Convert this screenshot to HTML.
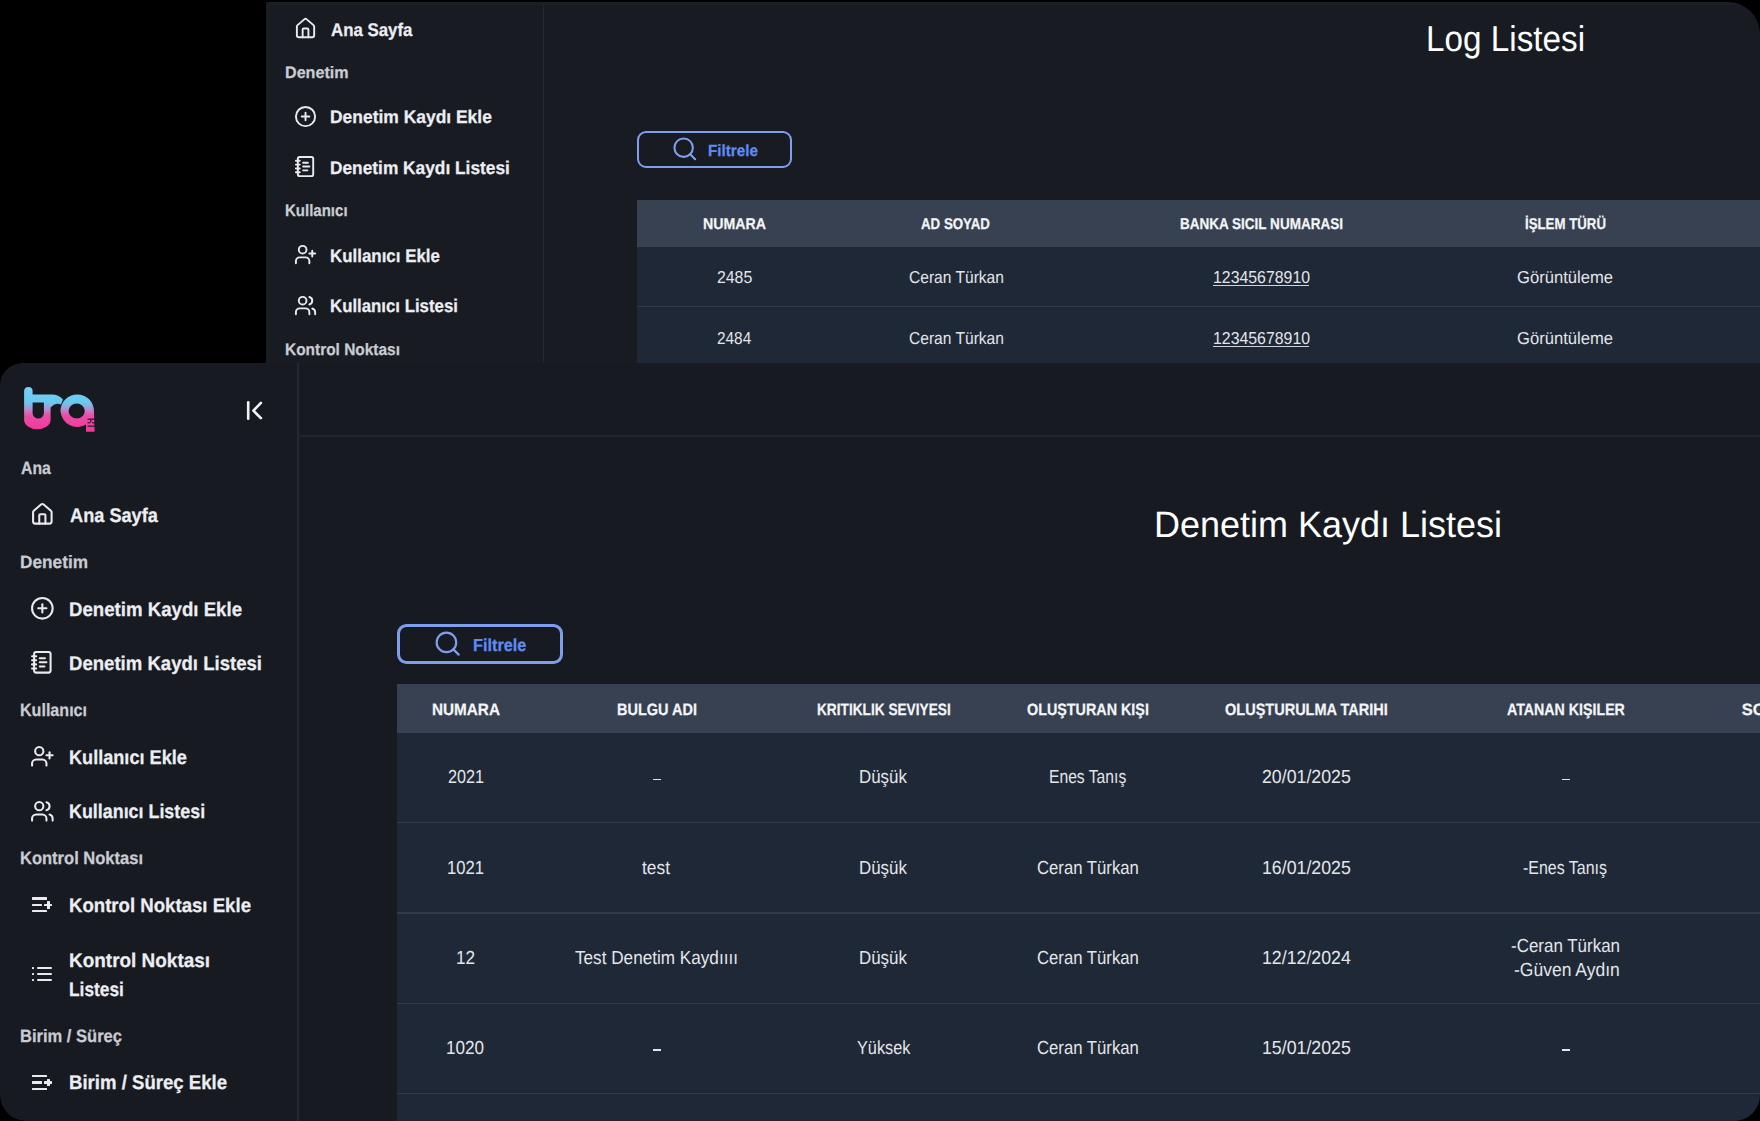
<!DOCTYPE html>
<html><head><meta charset="utf-8"><style>
*{margin:0;padding:0;box-sizing:border-box}
html,body{width:1760px;height:1121px;overflow:hidden;background:#000}
body{position:relative;font-family:"Liberation Sans",sans-serif;text-rendering:geometricPrecision}
.t{position:absolute;white-space:nowrap;transform-origin:0 0}
.t.b{-webkit-text-stroke:0.25px currentColor}
.ic{position:absolute;overflow:visible}
.r{position:absolute}
</style></head><body>
<div class="r" style="left:0;top:0;width:1760px;height:1121px;clip-path:inset(2px 0px 0px 266px round 0px 32px 0px 0px)">
<div class="r" style="left:266px;top:2px;width:1600px;height:400px;background:#181b22;border-top-right-radius:32px;border-top:3px solid #1c1f23;border-left:4px solid #1b1e21"></div>
<div class="r" style="left:542.5px;top:5px;width:1px;height:360px;background:#242934"></div>
<svg class="ic" style="left:294.12px;top:16.50px;width:23.05px;height:23.05px" viewBox="0 0 24 24" fill="none" stroke="#e9eaee" stroke-width="2" stroke-linecap="round" stroke-linejoin="round"><path d="M15 21v-8a1 1 0 0 0-1-1h-4a1 1 0 0 0-1 1v8"/><path d="M3 10a2 2 0 0 1 .709-1.528l7-5.999a2 2 0 0 1 2.582 0l7 5.999A2 2 0 0 1 21 10v9a2 2 0 0 1-2 2H5a2 2 0 0 1-2-2z"/></svg>
<svg class="ic" style="left:294.12px;top:104.70px;width:23.05px;height:23.05px" viewBox="0 0 24 24" fill="none" stroke="#e9eaee" stroke-width="2" stroke-linecap="round" stroke-linejoin="round"><circle cx="12" cy="12" r="10"/><path d="M8 12h8"/><path d="M12 8v8"/></svg>
<svg class="ic" style="left:294.12px;top:155.00px;width:23.05px;height:23.05px" viewBox="0 0 24 24" fill="none" stroke="#e9eaee" stroke-width="2" stroke-linecap="round" stroke-linejoin="round"><path d="M2 6h4"/><path d="M2 10h4"/><path d="M2 14h4"/><path d="M2 18h4"/><rect width="16" height="20" x="4" y="2" rx="2"/><path d="M9.5 8h5"/><path d="M9.5 12H16"/><path d="M9.5 16H14"/></svg>
<svg class="ic" style="left:294.12px;top:242.90px;width:23.05px;height:23.05px" viewBox="0 0 24 24" fill="none" stroke="#e9eaee" stroke-width="2" stroke-linecap="round" stroke-linejoin="round"><path d="M16 21v-2a4 4 0 0 0-4-4H6a4 4 0 0 0-4 4v2"/><circle cx="9" cy="7" r="4"/><line x1="19" x2="19" y1="8" y2="14"/><line x1="22" x2="16" y1="11" y2="11"/></svg>
<svg class="ic" style="left:294.12px;top:294.10px;width:23.05px;height:23.05px" viewBox="0 0 24 24" fill="none" stroke="#e9eaee" stroke-width="2" stroke-linecap="round" stroke-linejoin="round"><path d="M16 21v-2a4 4 0 0 0-4-4H6a4 4 0 0 0-4 4v2"/><circle cx="9" cy="7" r="4"/><path d="M22 21v-2a4 4 0 0 0-3-3.87"/><path d="M16 3.13a4 4 0 0 1 0 7.75"/></svg>
<div class="t b" style="left:330.90px;top:21.09px;font-size:18.31px;line-height:18.31px;font-weight:bold;color:#eceef2;transform:scaleX(0.9193);">Ana Sayfa</div>
<div class="t b" style="left:329.90px;top:108.49px;font-size:18.31px;line-height:18.31px;font-weight:bold;color:#eceef2;transform:scaleX(0.9531);">Denetim Kaydı Ekle</div>
<div class="t b" style="left:329.90px;top:158.89px;font-size:18.31px;line-height:18.31px;font-weight:bold;color:#eceef2;transform:scaleX(0.9459);">Denetim Kaydı Listesi</div>
<div class="t b" style="left:329.90px;top:247.29px;font-size:18.31px;line-height:18.31px;font-weight:bold;color:#eceef2;transform:scaleX(0.9238);">Kullanıcı Ekle</div>
<div class="t b" style="left:329.90px;top:297.09px;font-size:18.31px;line-height:18.31px;font-weight:bold;color:#eceef2;transform:scaleX(0.9183);">Kullanıcı Listesi</div>
<div class="t b" style="left:284.50px;top:65.17px;font-size:16.57px;line-height:16.57px;font-weight:bold;color:#c9ccd3;transform:scaleX(0.9726);">Denetim</div>
<div class="t b" style="left:284.50px;top:203.37px;font-size:16.57px;line-height:16.57px;font-weight:bold;color:#c9ccd3;transform:scaleX(0.9063);">Kullanıcı</div>
<div class="t b" style="left:284.50px;top:341.57px;font-size:16.57px;line-height:16.57px;font-weight:bold;color:#c9ccd3;transform:scaleX(0.9325);">Kontrol Noktası</div>
<div class="t" style="left:1426.00px;top:20.88px;font-size:36.05px;line-height:36.05px;font-weight:normal;color:#ffffff;transform:scaleX(0.9232);">Log Listesi</div>
<div class="r" style="left:636.8px;top:131px;width:155.5px;height:37px;border:2.8px solid #7d9fee;border-radius:9px"></div>
<svg class="ic" style="left:670.75px;top:135.05px;width:27.60px;height:27.60px" viewBox="0 0 24 24" fill="none" stroke="#7d9fee" stroke-width="1.8" stroke-linecap="round" stroke-linejoin="round"><circle cx="11" cy="11" r="8"/><path d="m21 21-4.3-4.3"/></svg>
<div class="t b" style="left:708.10px;top:142.74px;font-size:16.13px;line-height:16.13px;font-weight:bold;color:#5f8cf2;transform:scaleX(0.9445);">Filtrele</div>
<div class="r" style="left:636.5px;top:200px;width:1200px;height:46.5px;background:#374151"></div>
<div class="r" style="left:636.5px;top:246.5px;width:1200px;height:130px;background:#1f2837"></div>
<div class="r" style="left:636.5px;top:306px;width:1200px;height:1px;background:#333b4a"></div>
<div class="t b" style="left:702.99px;top:217.33px;font-size:15.55px;line-height:15.55px;font-weight:bold;color:#f4f5f7;transform:scaleX(0.9118);">NUMARA</div>
<div class="t b" style="left:921.20px;top:217.33px;font-size:15.55px;line-height:15.55px;font-weight:bold;color:#f4f5f7;transform:scaleX(0.8553);">AD SOYAD</div>
<div class="t b" style="left:1179.69px;top:217.33px;font-size:15.55px;line-height:15.55px;font-weight:bold;color:#f4f5f7;transform:scaleX(0.8694);">BANKA SICIL NUMARASI</div>
<div class="t b" style="left:1524.98px;top:217.33px;font-size:15.55px;line-height:15.55px;font-weight:bold;color:#f4f5f7;transform:scaleX(0.8527);">İŞLEM TÜRÜ</div>
<div class="t" style="left:716.98px;top:268.76px;font-size:17.30px;line-height:17.30px;font-weight:normal;color:#e3e5e9;transform:scaleX(0.9159);">2485</div>
<div class="t" style="left:908.99px;top:268.76px;font-size:17.30px;line-height:17.30px;font-weight:normal;color:#e3e5e9;transform:scaleX(0.9011);">Ceran Türkan</div>
<div class="t" style="left:1212.53px;top:268.76px;font-size:17.30px;line-height:17.30px;font-weight:normal;color:#e3e5e9;transform:scaleX(0.9179);">12345678910</div>
<div class="r" style="left:1213.4px;top:284.6px;width:95.7px;height:1.2px;background:#d0d3d9"></div>
<div class="t" style="left:1517.16px;top:268.76px;font-size:17.30px;line-height:17.30px;font-weight:normal;color:#e3e5e9;transform:scaleX(0.9610);">Görüntüleme</div>
<div class="t" style="left:716.98px;top:329.86px;font-size:17.30px;line-height:17.30px;font-weight:normal;color:#e3e5e9;transform:scaleX(0.8898);">2484</div>
<div class="t" style="left:908.99px;top:329.86px;font-size:17.30px;line-height:17.30px;font-weight:normal;color:#e3e5e9;transform:scaleX(0.9011);">Ceran Türkan</div>
<div class="t" style="left:1212.53px;top:329.86px;font-size:17.30px;line-height:17.30px;font-weight:normal;color:#e3e5e9;transform:scaleX(0.9179);">12345678910</div>
<div class="r" style="left:1213.4px;top:345.7px;width:95.7px;height:1.2px;background:#d0d3d9"></div>
<div class="t" style="left:1517.16px;top:329.86px;font-size:17.30px;line-height:17.30px;font-weight:normal;color:#e3e5e9;transform:scaleX(0.9610);">Görüntüleme</div>
</div>
<div class="r" style="left:0;top:0;width:1760px;height:1121px;clip-path:inset(363px 0px 0px 0px round 22px 0px 26px 26px)">
<div class="r" style="left:0;top:363px;width:1760px;height:758px;background:#171a21;border-top-left-radius:22px;border-bottom-left-radius:26px;border-bottom-right-radius:26px;overflow:hidden">
</div>
<div class="r" style="left:297px;top:363px;width:1.5px;height:758px;background:#232833"></div>
<div class="r" style="left:298px;top:435.3px;width:1462px;height:1.4px;background:#20242c"></div>
<svg class="ic" style="left:15px;top:380px;width:90px;height:60px" viewBox="0 0 90 60">
<defs><linearGradient id="lg" x1="0" y1="7" x2="0" y2="50" gradientUnits="userSpaceOnUse">
<stop offset="0" stop-color="#74d3f6"/><stop offset="0.36" stop-color="#69c8ef"/><stop offset="0.52" stop-color="#b98ccd"/><stop offset="0.66" stop-color="#e94ea8"/><stop offset="1" stop-color="#f4369a"/></linearGradient></defs>
<g fill="url(#lg)" fill-rule="evenodd">
<path d="M9.1 11.5 Q9.1 7 13.4 7 Q17.6 7 17.6 11 L17.6 14.4 L37 14.4 Q43.5 14.4 48 19.5 L46 24.5 Q40.5 22 35.6 27.5 L35.6 40 A13.25 9.2 0 0 1 9.1 40 Z M17.6 22.5 L28.9 22.5 L28.9 33 A5.65 5.5 0 0 1 17.6 33 Z"/>
<path d="M45.5 31.2 A16.75 16.8 0 0 1 79 31.2 L79.6 51.8 L71 51.8 L71 44.5 A16.75 16.8 0 0 1 45.5 31.2 Z M53.6 31 A8.1 7.6 0 0 0 69.8 31 A8.1 7.6 0 0 0 53.6 31 Z"/>
</g>
<g fill="#171a21"><rect x="72.5" y="38.6" width="7.5" height="1.2"/><rect x="72.5" y="42.2" width="3" height="1.1"/><rect x="77" y="42.2" width="3" height="1.1"/><rect x="72.5" y="45.6" width="7.5" height="1.1"/><rect x="75.2" y="40" width="1.2" height="2"/></g>
</svg>
<svg class="ic" style="left:240px;top:395px;width:30px;height:30px" viewBox="0 0 30 30" fill="none" stroke="#f2f3f5" stroke-width="2.6" stroke-linecap="round" stroke-linejoin="round"><path d="M8.2 7.2 V23.8"/><path d="M20.9 7.9 L13.4 15.7 L20.9 23.2"/></svg>
<svg class="ic" style="left:29.60px;top:501.80px;width:24.70px;height:24.70px" viewBox="0 0 24 24" fill="none" stroke="#e9eaee" stroke-width="2" stroke-linecap="round" stroke-linejoin="round"><path d="M15 21v-8a1 1 0 0 0-1-1h-4a1 1 0 0 0-1 1v8"/><path d="M3 10a2 2 0 0 1 .709-1.528l7-5.999a2 2 0 0 1 2.582 0l7 5.999A2 2 0 0 1 21 10v9a2 2 0 0 1-2 2H5a2 2 0 0 1-2-2z"/></svg>
<svg class="ic" style="left:29.60px;top:596.00px;width:24.70px;height:24.70px" viewBox="0 0 24 24" fill="none" stroke="#e9eaee" stroke-width="2" stroke-linecap="round" stroke-linejoin="round"><circle cx="12" cy="12" r="10"/><path d="M8 12h8"/><path d="M12 8v8"/></svg>
<svg class="ic" style="left:29.60px;top:650.00px;width:24.70px;height:24.70px" viewBox="0 0 24 24" fill="none" stroke="#e9eaee" stroke-width="2" stroke-linecap="round" stroke-linejoin="round"><path d="M2 6h4"/><path d="M2 10h4"/><path d="M2 14h4"/><path d="M2 18h4"/><rect width="16" height="20" x="4" y="2" rx="2"/><path d="M9.5 8h5"/><path d="M9.5 12H16"/><path d="M9.5 16H14"/></svg>
<svg class="ic" style="left:29.60px;top:744.10px;width:24.70px;height:24.70px" viewBox="0 0 24 24" fill="none" stroke="#e9eaee" stroke-width="2" stroke-linecap="round" stroke-linejoin="round"><path d="M16 21v-2a4 4 0 0 0-4-4H6a4 4 0 0 0-4 4v2"/><circle cx="9" cy="7" r="4"/><line x1="19" x2="19" y1="8" y2="14"/><line x1="22" x2="16" y1="11" y2="11"/></svg>
<svg class="ic" style="left:29.60px;top:798.50px;width:24.70px;height:24.70px" viewBox="0 0 24 24" fill="none" stroke="#e9eaee" stroke-width="2" stroke-linecap="round" stroke-linejoin="round"><path d="M16 21v-2a4 4 0 0 0-4-4H6a4 4 0 0 0-4 4v2"/><circle cx="9" cy="7" r="4"/><path d="M22 21v-2a4 4 0 0 0-3-3.87"/><path d="M16 3.13a4 4 0 0 1 0 7.75"/></svg>
<div class="r" style="left:32px;top:897.20px;width:15.1px;height:2.4px;background:#e9eaee;border-radius:0.6px"></div>
<div class="r" style="left:32px;top:903.55px;width:9.7px;height:2.4px;background:#e9eaee;border-radius:0.6px"></div>
<div class="r" style="left:32px;top:909.90px;width:15.1px;height:2.4px;background:#e9eaee;border-radius:0.6px"></div>
<div class="r" style="left:47.4px;top:900.95px;width:2.4px;height:7.6px;background:#e9eaee;border-radius:0.6px"></div>
<div class="r" style="left:44.3px;top:903.55px;width:8px;height:2.4px;background:#e9eaee;border-radius:0.6px"></div>
<div class="r" style="left:32px;top:1075.10px;width:15.1px;height:2.4px;background:#e9eaee;border-radius:0.6px"></div>
<div class="r" style="left:32px;top:1081.35px;width:9.7px;height:2.4px;background:#e9eaee;border-radius:0.6px"></div>
<div class="r" style="left:32px;top:1087.60px;width:15.1px;height:2.4px;background:#e9eaee;border-radius:0.6px"></div>
<div class="r" style="left:47.4px;top:1078.75px;width:2.4px;height:7.6px;background:#e9eaee;border-radius:0.6px"></div>
<div class="r" style="left:44.3px;top:1081.35px;width:8px;height:2.4px;background:#e9eaee;border-radius:0.6px"></div>
<div class="r" style="left:31.6px;top:966.50px;width:2.3px;height:2.4px;background:#e9eaee;border-radius:0.5px"></div>
<div class="r" style="left:37.1px;top:966.50px;width:15px;height:2.4px;background:#e9eaee;border-radius:1.2px"></div>
<div class="r" style="left:31.6px;top:972.65px;width:2.3px;height:2.4px;background:#e9eaee;border-radius:0.5px"></div>
<div class="r" style="left:37.1px;top:972.65px;width:15px;height:2.4px;background:#e9eaee;border-radius:1.2px"></div>
<div class="r" style="left:31.6px;top:978.80px;width:2.3px;height:2.4px;background:#e9eaee;border-radius:0.5px"></div>
<div class="r" style="left:37.1px;top:978.80px;width:15px;height:2.4px;background:#e9eaee;border-radius:1.2px"></div>
<div class="t b" style="left:70.10px;top:506.16px;font-size:19.77px;line-height:19.77px;font-weight:bold;color:#eceef2;transform:scaleX(0.9195);margin-top:0.7px">Ana Sayfa</div>
<div class="t b" style="left:69.10px;top:600.06px;font-size:19.77px;line-height:19.77px;font-weight:bold;color:#eceef2;transform:scaleX(0.9430);margin-top:0.7px">Denetim Kaydı Ekle</div>
<div class="t b" style="left:69.10px;top:654.16px;font-size:19.77px;line-height:19.77px;font-weight:bold;color:#eceef2;transform:scaleX(0.9396);margin-top:0.7px">Denetim Kaydı Listesi</div>
<div class="t b" style="left:69.10px;top:747.96px;font-size:19.77px;line-height:19.77px;font-weight:bold;color:#eceef2;transform:scaleX(0.9168);margin-top:0.7px">Kullanıcı Ekle</div>
<div class="t b" style="left:69.10px;top:802.56px;font-size:19.77px;line-height:19.77px;font-weight:bold;color:#eceef2;transform:scaleX(0.9046);margin-top:0.7px">Kullanıcı Listesi</div>
<div class="t b" style="left:69.10px;top:896.16px;font-size:19.77px;line-height:19.77px;font-weight:bold;color:#eceef2;transform:scaleX(0.9414);margin-top:0.7px">Kontrol Noktası Ekle</div>
<div class="t b" style="left:69.10px;top:951.06px;font-size:19.77px;line-height:19.77px;font-weight:bold;color:#eceef2;transform:scaleX(0.9583);margin-top:0.7px">Kontrol Noktası</div>
<div class="t b" style="left:69.10px;top:980.16px;font-size:19.77px;line-height:19.77px;font-weight:bold;color:#eceef2;transform:scaleX(0.8761);margin-top:0.7px">Listesi</div>
<div class="t b" style="left:69.10px;top:1073.76px;font-size:19.77px;line-height:19.77px;font-weight:bold;color:#eceef2;transform:scaleX(0.9406);margin-top:0.7px">Birim / Süreç Ekle</div>
<div class="t b" style="left:20.60px;top:459.76px;font-size:17.88px;line-height:17.88px;font-weight:bold;color:#c9ccd3;transform:scaleX(0.8850);">Ana</div>
<div class="t b" style="left:19.60px;top:553.56px;font-size:17.88px;line-height:17.88px;font-weight:bold;color:#c9ccd3;transform:scaleX(0.9650);">Denetim</div>
<div class="t b" style="left:19.60px;top:701.86px;font-size:17.88px;line-height:17.88px;font-weight:bold;color:#c9ccd3;transform:scaleX(0.9002);">Kullanıcı</div>
<div class="t b" style="left:19.60px;top:850.06px;font-size:17.88px;line-height:17.88px;font-weight:bold;color:#c9ccd3;transform:scaleX(0.9251);">Kontrol Noktası</div>
<div class="t b" style="left:19.60px;top:1027.66px;font-size:17.88px;line-height:17.88px;font-weight:bold;color:#c9ccd3;transform:scaleX(0.9254);">Birim / Süreç</div>
<div class="t" style="left:1153.60px;top:507.19px;font-size:36.63px;line-height:36.63px;font-weight:normal;color:#ffffff;transform:scaleX(0.9823);">Denetim Kaydı Listesi</div>
<div class="r" style="left:396.6px;top:624px;width:166.7px;height:40px;border:3px solid #7d9fee;border-radius:9.5px"></div>
<svg class="ic" style="left:433.20px;top:628.70px;width:29.30px;height:29.30px" viewBox="0 0 24 24" fill="none" stroke="#7d9fee" stroke-width="1.8" stroke-linecap="round" stroke-linejoin="round"><circle cx="11" cy="11" r="8"/><path d="m21 21-4.3-4.3"/></svg>
<div class="t b" style="left:473.10px;top:636.53px;font-size:17.44px;line-height:17.44px;font-weight:bold;color:#5f8cf2;transform:scaleX(0.9326);">Filtrele</div>
<div class="r" style="left:397px;top:684px;width:1363px;height:49px;background:#374151"></div>
<div class="r" style="left:397px;top:733px;width:1363px;height:388px;background:#1f2837"></div>
<div class="r" style="left:397px;top:822.0px;width:1363px;height:1.3px;background:#333b4a"></div>
<div class="r" style="left:397px;top:912.3px;width:1363px;height:1.3px;background:#333b4a"></div>
<div class="r" style="left:397px;top:1002.5px;width:1363px;height:1.3px;background:#333b4a"></div>
<div class="r" style="left:397px;top:1092.7px;width:1363px;height:1.3px;background:#333b4a"></div>
<div class="t b" style="left:432.19px;top:701.69px;font-size:16.42px;line-height:16.42px;font-weight:bold;color:#f4f5f7;transform:scaleX(0.9318);">NUMARA</div>
<div class="t b" style="left:616.78px;top:701.69px;font-size:16.42px;line-height:16.42px;font-weight:bold;color:#f4f5f7;transform:scaleX(0.8831);">BULGU ADI</div>
<div class="t b" style="left:817.39px;top:701.69px;font-size:16.42px;line-height:16.42px;font-weight:bold;color:#f4f5f7;transform:scaleX(0.8332);">KRITIKLIK SEVIYESI</div>
<div class="t b" style="left:1027.20px;top:701.69px;font-size:16.42px;line-height:16.42px;font-weight:bold;color:#f4f5f7;transform:scaleX(0.8739);">OLUŞTURAN KIŞI</div>
<div class="t b" style="left:1225.20px;top:701.69px;font-size:16.42px;line-height:16.42px;font-weight:bold;color:#f4f5f7;transform:scaleX(0.8845);">OLUŞTURULMA TARIHI</div>
<div class="t b" style="left:1507.20px;top:701.69px;font-size:16.42px;line-height:16.42px;font-weight:bold;color:#f4f5f7;transform:scaleX(0.8660);">ATANAN KIŞILER</div>
<div class="t b" style="left:1741.80px;top:701.69px;font-size:16.42px;line-height:16.42px;font-weight:bold;color:#f4f5f7;transform:scaleX(1.0000);">SO</div>
<div class="t" style="left:448.00px;top:769.30px;font-size:18.90px;line-height:18.90px;font-weight:normal;color:#e3e5e9;transform:scaleX(0.8563);">2021</div>
<div class="r" style="left:652.50px;top:778.70px;width:8.6px;height:1.7px;background:#e3e5e9"></div>
<div class="t" style="left:858.93px;top:769.30px;font-size:18.90px;line-height:18.90px;font-weight:normal;color:#e3e5e9;transform:scaleX(0.8948);">Düşük</div>
<div class="t" style="left:1049.08px;top:769.30px;font-size:18.90px;line-height:18.90px;font-weight:normal;color:#e3e5e9;transform:scaleX(0.8293);">Enes Tanış</div>
<div class="t" style="left:1262.18px;top:769.30px;font-size:18.90px;line-height:18.90px;font-weight:normal;color:#e3e5e9;transform:scaleX(0.9394);">20/01/2025</div>
<div class="r" style="left:1561.70px;top:778.70px;width:8.6px;height:1.7px;background:#e3e5e9"></div>
<div class="t" style="left:446.99px;top:860.10px;font-size:18.90px;line-height:18.90px;font-weight:normal;color:#e3e5e9;transform:scaleX(0.8807);">1021</div>
<div class="t" style="left:642.40px;top:860.10px;font-size:18.90px;line-height:18.90px;font-weight:normal;color:#e3e5e9;transform:scaleX(0.9193);">test</div>
<div class="t" style="left:858.93px;top:860.10px;font-size:18.90px;line-height:18.90px;font-weight:normal;color:#e3e5e9;transform:scaleX(0.8948);">Düşük</div>
<div class="t" style="left:1036.78px;top:860.10px;font-size:18.90px;line-height:18.90px;font-weight:normal;color:#e3e5e9;transform:scaleX(0.8841);">Ceran Türkan</div>
<div class="t" style="left:1262.18px;top:860.10px;font-size:18.90px;line-height:18.90px;font-weight:normal;color:#e3e5e9;transform:scaleX(0.9394);">16/01/2025</div>
<div class="t" style="left:1523.49px;top:860.10px;font-size:18.90px;line-height:18.90px;font-weight:normal;color:#e3e5e9;transform:scaleX(0.8450);">-Enes Tanış</div>
<div class="t" style="left:455.97px;top:950.00px;font-size:18.90px;line-height:18.90px;font-weight:normal;color:#e3e5e9;transform:scaleX(0.9071);">12</div>
<div class="t" style="left:575.40px;top:950.00px;font-size:18.90px;line-height:18.90px;font-weight:normal;color:#e3e5e9;transform:scaleX(0.9077);">Test Denetim Kaydıııı</div>
<div class="t" style="left:858.93px;top:950.00px;font-size:18.90px;line-height:18.90px;font-weight:normal;color:#e3e5e9;transform:scaleX(0.8948);">Düşük</div>
<div class="t" style="left:1036.78px;top:950.00px;font-size:18.90px;line-height:18.90px;font-weight:normal;color:#e3e5e9;transform:scaleX(0.8841);">Ceran Türkan</div>
<div class="t" style="left:1262.18px;top:950.00px;font-size:18.90px;line-height:18.90px;font-weight:normal;color:#e3e5e9;transform:scaleX(0.9394);">12/12/2024</div>
<div class="t" style="left:446.49px;top:1039.80px;font-size:18.90px;line-height:18.90px;font-weight:normal;color:#e3e5e9;transform:scaleX(0.9045);">1020</div>
<div class="r" style="left:652.50px;top:1049.20px;width:8.6px;height:1.7px;background:#e3e5e9"></div>
<div class="t" style="left:856.69px;top:1039.80px;font-size:18.90px;line-height:18.90px;font-weight:normal;color:#e3e5e9;transform:scaleX(0.8616);">Yüksek</div>
<div class="t" style="left:1036.78px;top:1039.80px;font-size:18.90px;line-height:18.90px;font-weight:normal;color:#e3e5e9;transform:scaleX(0.8841);">Ceran Türkan</div>
<div class="t" style="left:1262.18px;top:1039.80px;font-size:18.90px;line-height:18.90px;font-weight:normal;color:#e3e5e9;transform:scaleX(0.9394);">15/01/2025</div>
<div class="r" style="left:1561.70px;top:1049.20px;width:8.6px;height:1.7px;background:#e3e5e9"></div>
<div class="t" style="left:1511.49px;top:937.90px;font-size:18.90px;line-height:18.90px;font-weight:normal;color:#e3e5e9;transform:scaleX(0.8975);">-Ceran Türkan</div>
<div class="t" style="left:1513.58px;top:962.00px;font-size:18.90px;line-height:18.90px;font-weight:normal;color:#e3e5e9;transform:scaleX(0.9272);">-Güven Aydın</div>
</div>
</body></html>
